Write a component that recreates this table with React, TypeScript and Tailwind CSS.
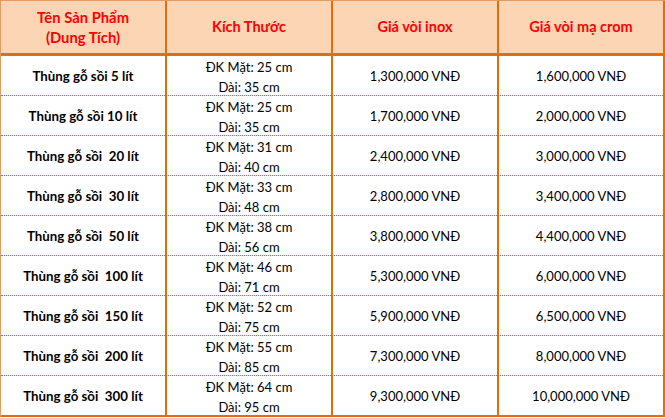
import React from "react";

const rows: [string, string, string, string, string][] = [
  ["Thùng gỗ sồi 5 lít", "25", "35", "1,300,000 VNĐ", "1,600,000 VNĐ"],
  ["Thùng gỗ sồi 10 lít", "25", "35", "1,700,000 VNĐ", "2,000,000 VNĐ"],
  ["Thùng gỗ sồi  20 lít", "31", "40", "2,400,000 VNĐ", "3,000,000 VNĐ"],
  ["Thùng gỗ sồi  30 lít", "33", "48", "2,800,000 VNĐ", "3,400,000 VNĐ"],
  ["Thùng gỗ sồi  50 lít", "38", "56", "3,800,000 VNĐ", "4,400,000 VNĐ"],
  ["Thùng gỗ sồi  100 lít", "46", "71", "5,300,000 VNĐ", "6,000,000 VNĐ"],
  ["Thùng gỗ sồi  150 lít", "52", "75", "5,900,000 VNĐ", "6,500,000 VNĐ"],
  ["Thùng gỗ sồi  200 lít", "55", "85", "7,300,000 VNĐ", "8,000,000 VNĐ"],
  ["Thùng gỗ sồi  300 lít", "64", "95", "9,300,000 VNĐ", "10,000,000 VNĐ"],
];

export default function App() {
  return (
    <div
      className="w-[665px] h-[418px] bg-white text-black overflow-hidden"
      style={{ fontFamily: "Lato, 'Open Sans', sans-serif" }}
    >
      <div className="border-t border-l border-[#e59a62] w-[665px]">
        <div className="grid grid-cols-[166px_166px_166px_166px] h-[55px] bg-[#fcd5b4] border-b-[3px] border-[#e46c0a]">
          <div className="border-r-2 border-[#e46c0a] flex items-center justify-center text-center text-[14.8px] leading-[20px] font-bold text-[#ff0000] pb-[1px]">
            <div>
              Tên Sản Phẩm
              <br />
              (Dung Tích)
            </div>
          </div>
          <div className="border-r-2 border-[#e46c0a] flex items-center justify-center text-[14.5px] font-bold text-[#ff0000] pb-[1px]">
            Kích Thước
          </div>
          <div className="border-r-2 border-[#e46c0a] flex items-center justify-center text-[14.5px] font-bold text-[#ff0000] pb-[1px]">
            Giá vòi inox
          </div>
          <div className="border-r-2 border-[#e46c0a] flex items-center justify-center text-[14.5px] font-bold text-[#ff0000] pb-[1px]">
            Giá vòi mạ crom
          </div>
        </div>
        {rows.map((r, i) => {
          const last = i === rows.length - 1;
          const rowCls = last
            ? "grid grid-cols-[166px_166px_166px_166px] h-[41px] border-b-2 border-[#e46c0a]"
            : "grid grid-cols-[166px_166px_166px_166px] h-[40px] border-b border-dotted border-[#e46c0a]";
          return (
            <div key={i} className={rowCls}>
              <div className="border-r-2 border-solid border-[#e46c0a] flex items-center justify-center text-[13.3px] font-bold whitespace-pre pt-[1px]">
                {r[0]}
              </div>
              <div className="border-r-2 border-solid border-[#e46c0a] flex flex-col items-center justify-center text-[13px] leading-[20px] pt-[1px]">
                <div>ĐK Mặt: {r[1]} cm</div>
                <div>Dài: {r[2]} cm</div>
              </div>
              <div className="border-r-2 border-solid border-[#e46c0a] flex items-center justify-center text-[13px] pt-[1px]">
                {r[3]}
              </div>
              <div className="border-r-2 border-solid border-[#e46c0a] flex items-center justify-center text-[13px] pt-[1px]">
                {r[4]}
              </div>
            </div>
          );
        })}
      </div>
    </div>
  );
}
